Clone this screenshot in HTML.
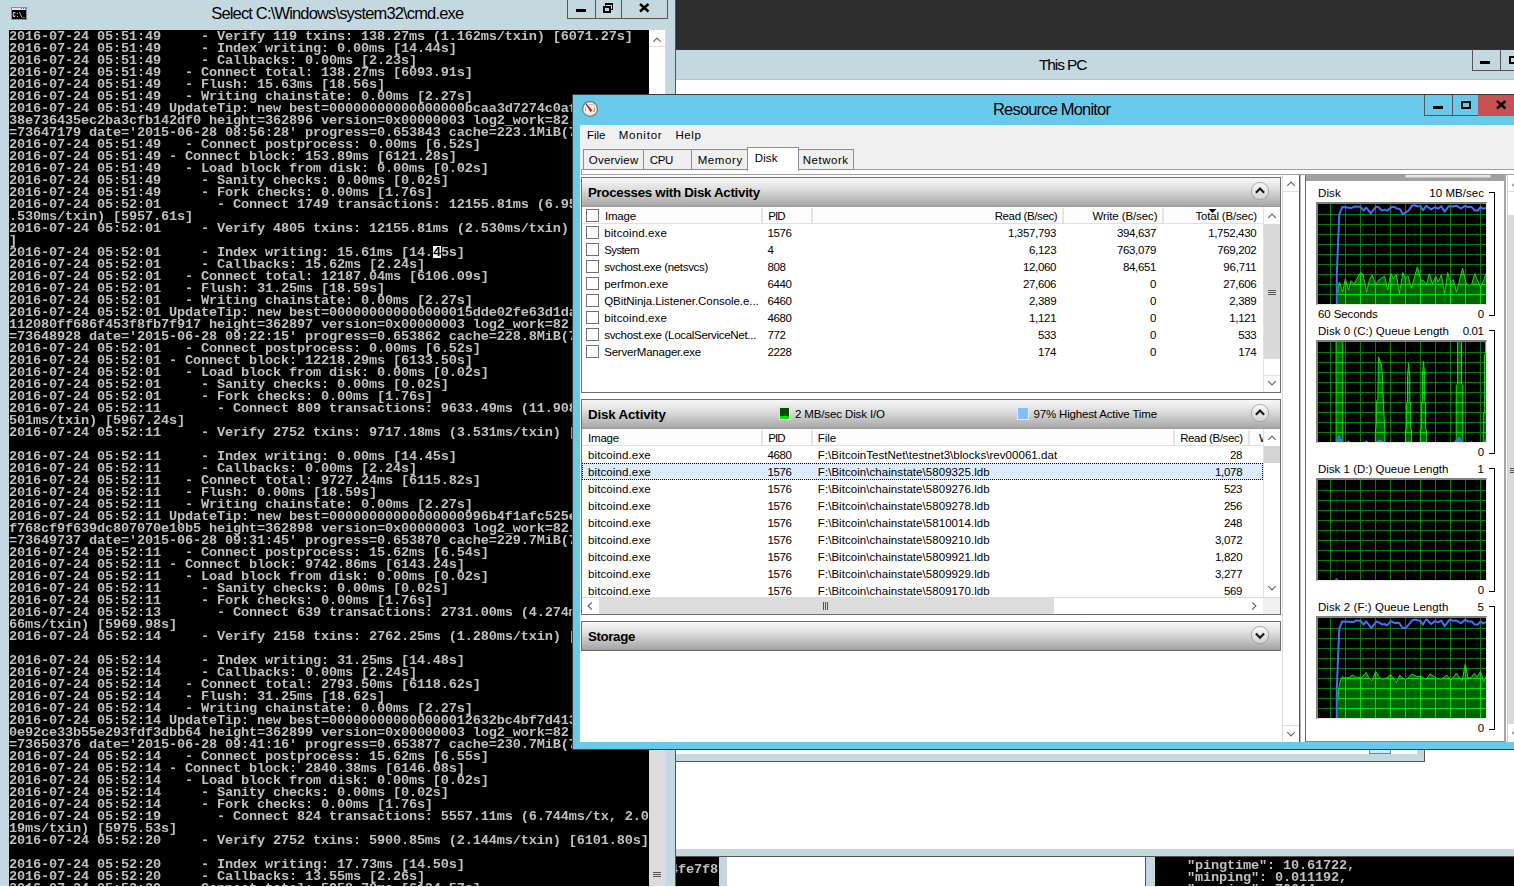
<!DOCTYPE html>
<html><head><meta charset="utf-8"><title>Resource Monitor</title>
<style>
html,body{margin:0;padding:0}
body{width:1514px;height:887px;overflow:hidden;background:#2d2d2d;position:relative;font-family:"Liberation Sans",sans-serif;font-size:12px;color:#000}
.ab{position:absolute}
div,span,i,svg{box-sizing:border-box}
.con{position:absolute;margin:0;will-change:transform;font:bold 13.6px/12px "Liberation Mono",monospace;color:#c0c0c0;white-space:pre;letter-spacing:-0.16px}
.sel{color:#000}
.t{position:absolute;white-space:nowrap;line-height:16px;font-size:11.5px}
.r{text-align:right}
.row{position:absolute;left:0;width:1514px;height:17px}
.row .t{top:0px}
.cb{position:absolute;width:13px;height:13px;border:1px solid #707070;background:#fff}
.sel2{}
.gr{position:absolute}
.gframe{position:absolute;width:171px;height:103px;border-top:2px solid #808080;border-left:2px solid #808080;border-right:1px solid #e8e8e8;border-bottom:1px solid #e8e8e8}
.hdr{position:absolute;background:linear-gradient(#f8f8f8 0%,#dedede 38%,#a6a6a6 97%,#8e8e8e 100%);}

.panel{position:absolute;border:1px solid #6e6e6e;background:#fff}
.wbtn{position:absolute;border:1px solid #555;border-top:none}
</style></head><body>

<!-- ====== background windows ====== -->
<!-- This PC -->
<div class="ab" style="left:676px;top:49px;width:838px;height:31px;background:#c4d8df;border-top:1px solid #333"></div>
<div class="ab" style="left:676px;top:79px;width:838px;height:1px;background:#b4c4ca"></div>
<span class="t" id="tpc" style="top:56px;font-size:15.5px;line-height:18px;letter-spacing:-1.090px;left:1038.9px;">This PC</span>
<div class="wbtn" style="left:1472px;top:49px;width:29px;height:22px"></div>
<div class="wbtn" style="left:1500px;top:49px;width:29px;height:22px"></div>
<div class="ab" style="left:1480px;top:61px;width:10px;height:3px;background:#000"></div>
<div class="ab" style="left:1509px;top:56px;width:10px;height:8px;border:2px solid #000"></div>
<div class="ab" style="left:676px;top:80px;width:838px;height:770px;background:#fff"></div>
<!-- bottom of This PC-like window -->
<div class="ab" style="left:676px;top:754px;width:749px;height:8px;background:#c4d8df;border-bottom:1px solid #555"></div>
<div class="ab" style="left:1417px;top:749px;width:8px;height:13px;background:#c4d8df;border-right:1px solid #555;border-bottom:1px solid #555"></div>
<div class="ab" style="left:1369px;top:748px;width:22px;height:6px;background:#cce8ff;border:1px solid #4a90c8"></div>
<!-- lower strip -->
<div class="ab" style="left:676px;top:849px;width:838px;height:8px;background:#c4d8df;border-bottom:1px solid #555"></div>
<div class="ab" style="left:676px;top:857px;width:838px;height:30px;background:#fff"></div>
<div class="ab" style="left:676px;top:857px;width:43px;height:29px;background:#000;overflow:hidden"><pre class="con" style="left:-6px;top:7px">4fe7f8</pre></div>
<div class="ab" style="left:719px;top:857px;width:8px;height:29px;background:#c4d8df"></div>
<div class="ab" style="left:1145px;top:857px;width:10px;height:29px;background:#c4d8df;border-left:1px solid #555"></div>
<div class="ab" style="left:1155px;top:857px;width:359px;height:29px;background:#000;overflow:hidden"><pre class="con" style="left:0;top:3px">    "pingtime": 10.61722,
    "minping": 0.011192,
    "version": 70014,</pre></div>

<!-- ====== cmd window ====== -->
<div class="ab" style="left:0;top:0;width:676px;height:886px;background:#c4d8df;border-right:1px solid #555"></div>
<div class="ab" style="left:9px;top:30px;width:640px;height:856px;background:#000;overflow:hidden"><div class="ab" style="left:424px;top:216px;width:8px;height:12px;background:#fff"></div><pre class="con" id="con" style="left:0;top:1px">2016-07-24 05:51:49     - Verify 119 txins: 138.27ms (1.162ms/txin) [6071.27s]
2016-07-24 05:51:49     - Index writing: 0.00ms [14.44s]
2016-07-24 05:51:49     - Callbacks: 0.00ms [2.23s]
2016-07-24 05:51:49   - Connect total: 138.27ms [6093.91s]
2016-07-24 05:51:49   - Flush: 15.63ms [18.56s]
2016-07-24 05:51:49   - Writing chainstate: 0.00ms [2.27s]
2016-07-24 05:51:49 UpdateTip: new best=00000000000000000bcaa3d7274c0af5c1b9e07d
38e736435ec2ba3cfb142df0 height=362896 version=0x00000003 log2_work=82.971514 tx
=73647179 date='2015-06-28 08:56:28' progress=0.653843 cache=223.1MiB(74812tx)
2016-07-24 05:51:49   - Connect postprocess: 0.00ms [6.52s]
2016-07-24 05:51:49 - Connect block: 153.89ms [6121.28s]
2016-07-24 05:51:49   - Load block from disk: 0.00ms [0.02s]
2016-07-24 05:51:49     - Sanity checks: 0.00ms [0.02s]
2016-07-24 05:51:49     - Fork checks: 0.00ms [1.76s]
2016-07-24 05:52:01       - Connect 1749 transactions: 12155.81ms (6.950ms/tx, 2
.530ms/txin) [5957.61s]
2016-07-24 05:52:01     - Verify 4805 txins: 12155.81ms (2.530ms/txin) [6083.43s
]
2016-07-24 05:52:01     - Index writing: 15.61ms [14.<span class="sel">4</span>5s]
2016-07-24 05:52:01     - Callbacks: 15.62ms [2.24s]
2016-07-24 05:52:01   - Connect total: 12187.04ms [6106.09s]
2016-07-24 05:52:01   - Flush: 31.25ms [18.59s]
2016-07-24 05:52:01   - Writing chainstate: 0.00ms [2.27s]
2016-07-24 05:52:01 UpdateTip: new best=000000000000000015dde02fe63d1da47c0b93e5
112080ff686f453f8fb7f917 height=362897 version=0x00000003 log2_work=82.971538 tx
=73648928 date='2015-06-28 09:22:15' progress=0.653862 cache=228.8MiB(76950tx)
2016-07-24 05:52:01   - Connect postprocess: 0.00ms [6.52s]
2016-07-24 05:52:01 - Connect block: 12218.29ms [6133.50s]
2016-07-24 05:52:01   - Load block from disk: 0.00ms [0.02s]
2016-07-24 05:52:01     - Sanity checks: 0.00ms [0.02s]
2016-07-24 05:52:01     - Fork checks: 0.00ms [1.76s]
2016-07-24 05:52:11       - Connect 809 transactions: 9633.49ms (11.908ms/tx, 3.
501ms/txin) [5967.24s]
2016-07-24 05:52:11     - Verify 2752 txins: 9717.18ms (3.531ms/txin) [6093.15s]

2016-07-24 05:52:11     - Index writing: 0.00ms [14.45s]
2016-07-24 05:52:11     - Callbacks: 0.00ms [2.24s]
2016-07-24 05:52:11   - Connect total: 9727.24ms [6115.82s]
2016-07-24 05:52:11   - Flush: 0.00ms [18.59s]
2016-07-24 05:52:11   - Writing chainstate: 0.00ms [2.27s]
2016-07-24 05:52:11 UpdateTip: new best=00000000000000000996b4f1afc525e8a31d07c4
f768cf9f639dc807070e10b5 height=362898 version=0x00000003 log2_work=82.971562 tx
=73649737 date='2015-06-28 09:31:45' progress=0.653870 cache=229.7MiB(77824tx)
2016-07-24 05:52:11   - Connect postprocess: 15.62ms [6.54s]
2016-07-24 05:52:11 - Connect block: 9742.86ms [6143.24s]
2016-07-24 05:52:11   - Load block from disk: 0.00ms [0.02s]
2016-07-24 05:52:11     - Sanity checks: 0.00ms [0.02s]
2016-07-24 05:52:11     - Fork checks: 0.00ms [1.76s]
2016-07-24 05:52:13       - Connect 639 transactions: 2731.00ms (4.274ms/tx, 1.2
66ms/txin) [5969.98s]
2016-07-24 05:52:14     - Verify 2158 txins: 2762.25ms (1.280ms/txin) [6095.91s]

2016-07-24 05:52:14     - Index writing: 31.25ms [14.48s]
2016-07-24 05:52:14     - Callbacks: 0.00ms [2.24s]
2016-07-24 05:52:14   - Connect total: 2793.50ms [6118.62s]
2016-07-24 05:52:14   - Flush: 31.25ms [18.62s]
2016-07-24 05:52:14   - Writing chainstate: 0.00ms [2.27s]
2016-07-24 05:52:14 UpdateTip: new best=000000000000000012632bc4bf7d413a95e6c208
0e92ce33b55e293fdf3dbb64 height=362899 version=0x00000003 log2_work=82.971586 tx
=73650376 date='2015-06-28 09:41:16' progress=0.653877 cache=230.7MiB(78463tx
2016-07-24 05:52:14   - Connect postprocess: 15.62ms [6.55s]
2016-07-24 05:52:14 - Connect block: 2840.38ms [6146.08s]
2016-07-24 05:52:14   - Load block from disk: 0.00ms [0.02s]
2016-07-24 05:52:14     - Sanity checks: 0.00ms [0.02s]
2016-07-24 05:52:14     - Fork checks: 0.00ms [1.76s]
2016-07-24 05:52:19       - Connect 824 transactions: 5557.11ms (6.744ms/tx, 2.0
19ms/txin) [5975.53s]
2016-07-24 05:52:20     - Verify 2752 txins: 5900.85ms (2.144ms/txin) [6101.80s]

2016-07-24 05:52:20     - Index writing: 17.73ms [14.50s]
2016-07-24 05:52:20     - Callbacks: 13.55ms [2.26s]
2016-07-24 05:52:20   - Connect total: 5958.78ms [6124.57s]</pre></div>
<!-- cmd scrollbar -->
<div class="ab" style="left:649px;top:30px;width:17px;height:856px;background:#fff;border-right:1px solid #dadada"></div>
<div class="ab" style="left:649px;top:749px;width:16px;height:137px;background:#dcdcdc"></div>
<svg class="ab" style="left:649px;top:32px" width="16" height="16"><polyline points="4.3,9.85 8,6.15 11.7,9.85" fill="none" stroke="#606060" stroke-width="1.1"/></svg>
<div class="ab" style="left:649px;top:46px;width:16px;height:1px;background:#dcdcdc"></div>
<div class="ab" style="left:653px;top:872px;width:8px;height:1px;background:#555;box-shadow:0 2px 0 #555,0 4px 0 #555"></div>
<!-- cmd icon -->
<svg class="ab" style="left:11px;top:7px;will-change:transform" width="16" height="13" viewBox="0 0 16 13"><rect x="0.5" y="0.5" width="15" height="12" fill="#000" stroke="#8e8e98"/><rect x="1" y="1" width="14" height="2" fill="#e2e6ee"/><rect x="10" y="1" width="1" height="1" fill="#5878b0"/><rect x="12" y="1" width="1" height="1" fill="#5878b0"/><rect x="14" y="1" width="1" height="1" fill="#5878b0"/><text x="1.6" y="10" font-family="Liberation Mono, monospace" font-weight="bold" font-size="7.5" fill="#fff" textLength="12.6" lengthAdjust="spacingAndGlyphs">C:\_</text></svg>
<span class="t" id="cmdtitle" style="top:4px;font-size:16.5px;line-height:18px;letter-spacing:-0.842px;left:211.3px;">Select C:\Windows\system32\cmd.exe</span>
<div class="wbtn" style="left:567px;top:0;width:29px;height:19px"></div>
<div class="wbtn" style="left:595px;top:0;width:27px;height:19px"></div>
<div class="wbtn" style="left:621px;top:0;width:47px;height:19px"></div>
<div class="ab" style="left:576px;top:9px;width:10px;height:3px;background:#000"></div>
<div class="ab" style="left:605px;top:3px;width:8px;height:7px;border:1px solid #000;border-top-width:2px"></div>
<div class="ab" style="left:603px;top:6px;width:8px;height:7px;border:2px solid #000;background:#c4d8df"></div>
<svg class="ab" style="left:639px;top:3px" width="11" height="10"><path d="M1 1 L9.5 8.5 M9.5 1 L1 8.5" stroke="#000" stroke-width="2.4" fill="none"/></svg>

<!-- ====== Resource Monitor ====== -->
<div class="ab" style="left:572px;top:94px;width:950px;height:656px;background:#69c9ea;border:1px solid #3c3c3c"></div>
<div class="ab" style="left:580px;top:125px;width:934px;height:617px;background:#f0f0f0"></div>
<span class="t" id="rmtitle" style="top:100px;font-size:16.5px;line-height:18px;letter-spacing:-0.822px;left:993.0px;">Resource Monitor</span>
<!-- icon -->
<svg class="ab" style="left:582px;top:101px" width="16" height="16"><defs><linearGradient id="icg" x1="0" y1="0" x2="0" y2="1"><stop offset="0" stop-color="#ffffff"/><stop offset="0.6" stop-color="#fbfbfb"/><stop offset="1" stop-color="#dedede"/></linearGradient></defs><circle cx="8" cy="7.9" r="7.4" fill="url(#icg)" stroke="#807878" stroke-width="1.3"/><path d="M3.5 10.4 L3.5 6.4" fill="none" stroke="#9aa8a0" stroke-width="1"/><path d="M6.8 3.4 L10.6 3.4 Q12 3.6 12.1 5.6" fill="none" stroke="#9aa8a0" stroke-width="0.9"/><path d="M12.6 6.2 L12.6 9.4 Q12.5 10.5 11.2 10.6" fill="none" stroke="#f08424" stroke-width="1.1"/><polygon points="3.6,3.2 4.5,2.6 10.3,9.5 8.5,11" fill="#d40f14"/></svg>
<!-- RM buttons -->
<div class="wbtn" style="left:1424px;top:95px;width:29px;height:21px"></div>
<div class="wbtn" style="left:1452px;top:95px;width:27px;height:21px"></div>
<div class="ab" style="left:1478px;top:95px;width:44px;height:21px;background:#c75050"></div>
<div class="ab" style="left:1433px;top:106px;width:10px;height:3px;background:#000"></div>
<div class="ab" style="left:1461px;top:101px;width:10px;height:8px;border:2px solid #000"></div>
<svg class="ab" style="left:1496px;top:100px" width="11" height="10"><path d="M1 1 L9.5 8.5 M9.5 1 L1 8.5" stroke="#000" stroke-width="2.4" fill="none"/></svg>
<!-- menu -->
<span class="t" style="top:127px;letter-spacing:0.032px;left:586.9px;">File</span>
<span class="t" style="top:127px;letter-spacing:0.771px;left:618.7px;">Monitor</span>
<span class="t" style="top:127px;letter-spacing:0.626px;left:675.4px;">Help</span>
<!-- tabs -->
<div class="ab" style="left:581px;top:169px;width:940px;height:6px;background:#fdfdfd;border:1px solid #a0a0a0"></div>
<div class="ab" style="left:583px;top:149px;width:61px;height:21px;border:1px solid #8e8e8e;background:#efefef"></div>
<div class="ab" style="left:643px;top:149px;width:49px;height:21px;border:1px solid #8e8e8e;background:#efefef"></div>
<div class="ab" style="left:691px;top:149px;width:57px;height:21px;border:1px solid #8e8e8e;background:#efefef"></div>
<div class="ab" style="left:798px;top:149px;width:56px;height:21px;border:1px solid #8e8e8e;background:#efefef"></div>
<div class="ab" style="left:747px;top:147px;width:52px;height:24px;border:1px solid #8e8e8e;border-bottom:none;background:#fff"></div>
<span class="t" style="top:152px;letter-spacing:0.215px;left:588.8px;">Overview</span>
<span class="t" style="top:152px;letter-spacing:-0.374px;left:649.8px;">CPU</span>
<span class="t" style="top:152px;letter-spacing:0.605px;left:697.7px;">Memory</span>
<span class="t" style="top:150px;letter-spacing:0.096px;left:754.8px;">Disk</span>
<span class="t" style="top:152px;letter-spacing:0.510px;left:802.8px;">Network</span>
<!-- main white area -->
<div class="ab" style="left:580px;top:175px;width:703px;height:567px;background:#fff"></div>
<!-- left pane scrollbar -->
<div class="ab" style="left:1282px;top:175px;width:17px;height:567px;background:#fff;border-left:1px solid #dcdcdc"></div>
<div class="ab" style="left:1283px;top:191px;width:16px;height:1px;background:#dcdcdc"></div>
<div class="ab" style="left:1283px;top:725px;width:16px;height:1px;background:#dcdcdc"></div>
<svg class="ab" style="left:1283px;top:176px" width="16" height="16"><polyline points="4.3,9.85 8,6.15 11.7,9.85" fill="none" stroke="#606060" stroke-width="1.1"/></svg>
<svg class="ab" style="left:1283px;top:726px" width="16" height="16"><polyline points="4.3,6.15 8,9.85 11.7,6.15" fill="none" stroke="#606060" stroke-width="1.1"/></svg>
<!-- splitter -->
<div class="ab" style="left:1299px;top:175px;width:7px;height:567px;background:#fff;border-left:1px solid #5a5a5a;border-right:1px solid #696969"></div>
<div class="ab" style="left:1300px;top:175px;width:1px;height:567px;background:#b8b8b8"></div>

<!-- Processes panel -->
<div class="panel" style="left:581px;top:177px;width:700px;height:216px"></div>
<div class="hdr" style="left:582px;top:178px;width:698px;height:29px"></div>
<span class="t" style="top:183px;font-size:13.333px;font-weight:700;line-height:20px;letter-spacing:-0.298px;left:587.9px;">Processes with Disk Activity</span>
<svg class="ab" style="left:1250px;top:181px" width="20" height="20"><defs><linearGradient id="cg1260191" x1="0" y1="0" x2="0" y2="1"><stop offset="0" stop-color="#fafafa"/><stop offset="1" stop-color="#d2d2d2"/></linearGradient></defs><circle cx="10" cy="10" r="8.6" fill="url(#cg1260191)" stroke="#9a9a9a" stroke-width="0.8"/><polyline points="5.9,11.8 10,7.6 14.1,11.8" fill="none" stroke="#1a1a1a" stroke-width="2.2"/></svg>
<div class="ab" style="left:582px;top:207px;width:681px;height:17px;background:#fdfdfd;border-bottom:1px solid #e0e0e0"></div>
<i class="cb" style="left:586px;top:209px"></i>
<span class="t" style="top:208px;letter-spacing:-0.182px;left:604.9px;">Image</span>
<span class="t" style="top:208px;letter-spacing:-0.971px;left:768.3px;">PID</span>
<span class="t" style="top:208px;letter-spacing:-0.371px;right:456.7px;text-align:right;">Read (B/sec)</span>
<span class="t" style="top:208px;letter-spacing:-0.099px;right:356.6px;text-align:right;">Write (B/sec)</span>
<span class="t" style="top:208px;letter-spacing:-0.182px;right:257.0px;text-align:right;">Total (B/sec)</span>
<div class="ab" style="left:761px;top:208px;width:2px;height:15px;background:#e4e4e4"></div>
<div class="ab" style="left:811px;top:208px;width:2px;height:15px;background:#e4e4e4"></div>
<div class="ab" style="left:1062px;top:208px;width:2px;height:15px;background:#e4e4e4"></div>
<div class="ab" style="left:1162px;top:208px;width:2px;height:15px;background:#e4e4e4"></div>
<svg class="ab" style="left:1208px;top:209px" width="9" height="5"><polygon points="0.5,0 8.5,0 4.5,4" fill="#000"/></svg>
<i class="cb" style="left:586px;top:226px"></i><span class="t" style="top:225px;letter-spacing:0.115px;left:604.2px;">bitcoind.exe</span><span class="t" style="top:225px;letter-spacing:-0.359px;left:767.5px;">1576</span><span class="t" style="top:225px;letter-spacing:-0.335px;right:457.9px;text-align:right;">1,357,793</span><span class="t" style="top:225px;letter-spacing:-0.346px;right:357.9px;text-align:right;">394,637</span><span class="t" style="top:225px;letter-spacing:-0.335px;right:257.7px;text-align:right;">1,752,430</span>
<i class="cb" style="left:586px;top:243px"></i><span class="t" style="top:242px;letter-spacing:-0.614px;left:604.2px;">System</span><span class="t" style="top:242px;letter-spacing:-0.248px;left:767.5px;">4</span><span class="t" style="top:242px;letter-spacing:-0.325px;right:457.8px;text-align:right;">6,123</span><span class="t" style="top:242px;letter-spacing:-0.346px;right:357.9px;text-align:right;">763,079</span><span class="t" style="top:242px;letter-spacing:-0.346px;right:257.7px;text-align:right;">769,202</span>
<i class="cb" style="left:586px;top:260px"></i><span class="t" style="top:259px;letter-spacing:-0.325px;left:604.2px;">svchost.exe (netsvcs)</span><span class="t" style="top:259px;letter-spacing:-0.343px;left:767.5px;">808</span><span class="t" style="top:259px;letter-spacing:-0.338px;right:457.9px;text-align:right;">12,060</span><span class="t" style="top:259px;letter-spacing:-0.338px;right:357.9px;text-align:right;">84,651</span><span class="t" style="top:259px;letter-spacing:-0.195px;right:257.5px;text-align:right;">96,711</span>
<i class="cb" style="left:586px;top:277px"></i><span class="t" style="top:276px;letter-spacing:0.002px;left:604.2px;">perfmon.exe</span><span class="t" style="top:276px;letter-spacing:-0.359px;left:767.5px;">6440</span><span class="t" style="top:276px;letter-spacing:-0.338px;right:457.9px;text-align:right;">27,606</span><span class="t" style="top:276px;letter-spacing:-0.248px;right:357.8px;text-align:right;">0</span><span class="t" style="top:276px;letter-spacing:-0.338px;right:257.7px;text-align:right;">27,606</span>
<i class="cb" style="left:586px;top:294px"></i><span class="t" style="top:293px;letter-spacing:-0.069px;left:604.2px;">QBitNinja.Listener.Console.e...</span><span class="t" style="top:293px;letter-spacing:-0.359px;left:767.5px;">6460</span><span class="t" style="top:293px;letter-spacing:-0.325px;right:457.8px;text-align:right;">2,389</span><span class="t" style="top:293px;letter-spacing:-0.248px;right:357.8px;text-align:right;">0</span><span class="t" style="top:293px;letter-spacing:-0.325px;right:257.6px;text-align:right;">2,389</span>
<i class="cb" style="left:586px;top:311px"></i><span class="t" style="top:310px;letter-spacing:0.115px;left:604.2px;">bitcoind.exe</span><span class="t" style="top:310px;letter-spacing:-0.359px;left:767.5px;">4680</span><span class="t" style="top:310px;letter-spacing:-0.325px;right:457.8px;text-align:right;">1,121</span><span class="t" style="top:310px;letter-spacing:-0.248px;right:357.8px;text-align:right;">0</span><span class="t" style="top:310px;letter-spacing:-0.325px;right:257.6px;text-align:right;">1,121</span>
<i class="cb" style="left:586px;top:328px"></i><span class="t" style="top:327px;letter-spacing:-0.297px;left:604.2px;">svchost.exe (LocalServiceNet...</span><span class="t" style="top:327px;letter-spacing:-0.343px;left:767.5px;">772</span><span class="t" style="top:327px;letter-spacing:-0.343px;right:457.9px;text-align:right;">533</span><span class="t" style="top:327px;letter-spacing:-0.248px;right:357.8px;text-align:right;">0</span><span class="t" style="top:327px;letter-spacing:-0.343px;right:257.7px;text-align:right;">533</span>
<i class="cb" style="left:586px;top:345px"></i><span class="t" style="top:344px;letter-spacing:-0.213px;left:604.2px;">ServerManager.exe</span><span class="t" style="top:344px;letter-spacing:-0.359px;left:767.5px;">2228</span><span class="t" style="top:344px;letter-spacing:-0.343px;right:457.9px;text-align:right;">174</span><span class="t" style="top:344px;letter-spacing:-0.248px;right:357.8px;text-align:right;">0</span><span class="t" style="top:344px;letter-spacing:-0.343px;right:257.7px;text-align:right;">174</span>
<!-- processes vscroll -->
<div class="ab" style="left:1263px;top:207px;width:17px;height:185px;background:#fff;border-left:1px solid #e0e0e0"></div>
<div class="ab" style="left:1264px;top:224px;width:16px;height:135px;background:#dadada"></div>
<div class="ab" style="left:1264px;top:375px;width:16px;height:1px;background:#e4e4e4"></div>
<div class="ab" style="left:1268px;top:290px;width:8px;height:1px;background:#555;box-shadow:0 2px 0 #555,0 4px 0 #555"></div>
<svg class="ab" style="left:1264px;top:208px" width="16" height="16"><polyline points="4.3,9.85 8,6.15 11.7,9.85" fill="none" stroke="#606060" stroke-width="1.1"/></svg>
<svg class="ab" style="left:1264px;top:375px" width="16" height="16"><polyline points="4.3,6.15 8,9.85 11.7,6.15" fill="none" stroke="#606060" stroke-width="1.1"/></svg>

<!-- Disk activity panel -->
<div class="panel" style="left:581px;top:399px;width:700px;height:216px"></div>
<div class="hdr" style="left:582px;top:400px;width:698px;height:29px"></div>
<span class="t" style="top:405px;font-size:13.333px;font-weight:700;line-height:20px;letter-spacing:-0.131px;left:587.9px;">Disk Activity</span>
<svg class="ab" style="left:1250px;top:403px" width="20" height="20"><defs><linearGradient id="cg1260413" x1="0" y1="0" x2="0" y2="1"><stop offset="0" stop-color="#fafafa"/><stop offset="1" stop-color="#d2d2d2"/></linearGradient></defs><circle cx="10" cy="10" r="8.6" fill="url(#cg1260413)" stroke="#9a9a9a" stroke-width="0.8"/><polyline points="5.9,11.8 10,7.6 14.1,11.8" fill="none" stroke="#1a1a1a" stroke-width="2.2"/></svg>
<div class="ab" style="left:779px;top:407px;width:11px;height:13px;background:#005000;border:1px solid #e0e0e0;border-right-color:#fff"></div>
<div class="ab" style="left:780px;top:416px;width:9px;height:3px;background:#00e000"></div>
<span class="t" style="top:406px;letter-spacing:-0.116px;left:794.9px;">2 MB/sec Disk I/O</span>
<div class="ab" style="left:1017px;top:407px;width:12px;height:13px;background:#80c0ff;border:1px solid #e8e8e8"></div>
<span class="t" style="top:406px;letter-spacing:-0.167px;left:1033.5px;">97% Highest Active Time</span>
<div class="ab" style="left:582px;top:429px;width:681px;height:17px;background:#fdfdfd;border-bottom:1px solid #e0e0e0"></div>
<span class="t" style="top:430px;letter-spacing:-0.182px;left:588.0px;">Image</span>
<span class="t" style="top:430px;letter-spacing:-0.971px;left:768.3px;">PID</span>
<span class="t" style="top:430px;letter-spacing:-0.043px;left:817.8px;">File</span>
<span class="t" style="top:430px;letter-spacing:-0.371px;right:271.2px;text-align:right;">Read (B/sec)</span>
<div class="ab" style="left:1259px;top:430px;width:4px;height:15px;overflow:hidden"><span class="t" style="left:0;top:0">W</span></div>
<div class="ab" style="left:761px;top:430px;width:2px;height:15px;background:#e4e4e4"></div>
<div class="ab" style="left:811px;top:430px;width:2px;height:15px;background:#e4e4e4"></div>
<div class="ab" style="left:1173px;top:430px;width:2px;height:15px;background:#e4e4e4"></div>
<div class="ab" style="left:1248px;top:430px;width:2px;height:15px;background:#e4e4e4"></div>
<div class="ab" style="left:582px;top:463px;width:681px;height:17px;background:#ddebff;border:1px dotted #000"></div>
<span class="t" style="top:447px;letter-spacing:0.115px;left:588.0px;">bitcoind.exe</span><span class="t" style="top:447px;letter-spacing:-0.359px;left:767.5px;">4680</span><span class="t" style="top:447px;letter-spacing:0.048px;left:817.8px;">F:\BitcoinTestNet\testnet3\blocks\rev00061.dat</span><span class="t" style="top:447px;letter-spacing:-0.319px;right:271.8px;text-align:right;">28</span>
<span class="t" style="top:464px;letter-spacing:0.115px;left:588.0px;">bitcoind.exe</span><span class="t" style="top:464px;letter-spacing:-0.359px;left:767.5px;">1576</span><span class="t" style="top:464px;letter-spacing:0.057px;left:817.8px;">F:\Bitcoin\chainstate\5809325.ldb</span><span class="t" style="top:464px;letter-spacing:-0.325px;right:271.8px;text-align:right;">1,078</span>
<span class="t" style="top:481px;letter-spacing:0.115px;left:588.0px;">bitcoind.exe</span><span class="t" style="top:481px;letter-spacing:-0.359px;left:767.5px;">1576</span><span class="t" style="top:481px;letter-spacing:0.057px;left:817.8px;">F:\Bitcoin\chainstate\5809276.ldb</span><span class="t" style="top:481px;letter-spacing:-0.343px;right:271.9px;text-align:right;">523</span>
<span class="t" style="top:498px;letter-spacing:0.115px;left:588.0px;">bitcoind.exe</span><span class="t" style="top:498px;letter-spacing:-0.359px;left:767.5px;">1576</span><span class="t" style="top:498px;letter-spacing:0.057px;left:817.8px;">F:\Bitcoin\chainstate\5809278.ldb</span><span class="t" style="top:498px;letter-spacing:-0.343px;right:271.9px;text-align:right;">256</span>
<span class="t" style="top:515px;letter-spacing:0.115px;left:588.0px;">bitcoind.exe</span><span class="t" style="top:515px;letter-spacing:-0.359px;left:767.5px;">1576</span><span class="t" style="top:515px;letter-spacing:0.057px;left:817.8px;">F:\Bitcoin\chainstate\5810014.ldb</span><span class="t" style="top:515px;letter-spacing:-0.343px;right:271.9px;text-align:right;">248</span>
<span class="t" style="top:532px;letter-spacing:0.115px;left:588.0px;">bitcoind.exe</span><span class="t" style="top:532px;letter-spacing:-0.359px;left:767.5px;">1576</span><span class="t" style="top:532px;letter-spacing:0.057px;left:817.8px;">F:\Bitcoin\chainstate\5809210.ldb</span><span class="t" style="top:532px;letter-spacing:-0.325px;right:271.8px;text-align:right;">3,072</span>
<span class="t" style="top:549px;letter-spacing:0.115px;left:588.0px;">bitcoind.exe</span><span class="t" style="top:549px;letter-spacing:-0.359px;left:767.5px;">1576</span><span class="t" style="top:549px;letter-spacing:0.057px;left:817.8px;">F:\Bitcoin\chainstate\5809921.ldb</span><span class="t" style="top:549px;letter-spacing:-0.325px;right:271.8px;text-align:right;">1,820</span>
<span class="t" style="top:566px;letter-spacing:0.115px;left:588.0px;">bitcoind.exe</span><span class="t" style="top:566px;letter-spacing:-0.359px;left:767.5px;">1576</span><span class="t" style="top:566px;letter-spacing:0.057px;left:817.8px;">F:\Bitcoin\chainstate\5809929.ldb</span><span class="t" style="top:566px;letter-spacing:-0.325px;right:271.8px;text-align:right;">3,277</span>
<span class="t" style="top:583px;letter-spacing:0.115px;left:588.0px;">bitcoind.exe</span><span class="t" style="top:583px;letter-spacing:-0.359px;left:767.5px;">1576</span><span class="t" style="top:583px;letter-spacing:0.057px;left:817.8px;">F:\Bitcoin\chainstate\5809170.ldb</span><span class="t" style="top:583px;letter-spacing:-0.343px;right:271.9px;text-align:right;">569</span>
<!-- disk activity vscroll -->
<div class="ab" style="left:1263px;top:429px;width:17px;height:169px;background:#fff;border-left:1px solid #e0e0e0"></div>
<div class="ab" style="left:1264px;top:446px;width:16px;height:17px;background:#d4d4d4"></div>
<svg class="ab" style="left:1264px;top:430px" width="16" height="16"><polyline points="4.3,9.85 8,6.15 11.7,9.85" fill="none" stroke="#606060" stroke-width="1.1"/></svg>
<svg class="ab" style="left:1264px;top:580px" width="16" height="16"><polyline points="4.3,6.15 8,9.85 11.7,6.15" fill="none" stroke="#606060" stroke-width="1.1"/></svg>
<!-- hscroll -->
<div class="ab" style="left:582px;top:597px;width:698px;height:17px;background:#fff;border-top:1px solid #dcdcdc"></div>
<div class="ab" style="left:599px;top:598px;width:455px;height:16px;background:#dcdcdc"></div>
<div class="ab" style="left:1263px;top:598px;width:17px;height:16px;background:#f0f0f0"></div>
<div class="ab" style="left:823px;top:602px;width:1px;height:8px;background:#555;box-shadow:2px 0 0 #555,4px 0 0 #555"></div>
<svg class="ab" style="left:582px;top:598px" width="16" height="16"><polyline points="9.85,4.3 6.15,8 9.85,11.7" fill="none" stroke="#606060" stroke-width="1.1"/></svg>
<svg class="ab" style="left:1246px;top:598px" width="16" height="16"><polyline points="6.15,4.3 9.85,8 6.15,11.7" fill="none" stroke="#606060" stroke-width="1.1"/></svg>

<!-- Storage panel -->
<div class="panel" style="left:581px;top:621px;width:700px;height:30px"></div>
<div class="hdr" style="left:582px;top:622px;width:698px;height:28px"></div>
<span class="t" style="top:627px;font-size:13.333px;font-weight:700;line-height:20px;letter-spacing:-0.359px;left:587.9px;">Storage</span>
<svg class="ab" style="left:1250px;top:625px" width="20" height="20"><defs><linearGradient id="cg1260635" x1="0" y1="0" x2="0" y2="1"><stop offset="0" stop-color="#fafafa"/><stop offset="1" stop-color="#d2d2d2"/></linearGradient></defs><circle cx="10" cy="10" r="8.6" fill="url(#cg1260635)" stroke="#9a9a9a" stroke-width="0.8"/><polyline points="5.9,8.6 10,12.8 14.1,8.6" fill="none" stroke="#1a1a1a" stroke-width="2.2"/></svg>

<!-- graph pane -->
<div class="ab" style="left:1306px;top:175px;width:200px;height:567px;background:#fff;border-bottom:1px solid #8a8a8a;border-right:2px solid #a6a6a6"></div>
<div class="ab" style="left:1306px;top:175px;width:198px;height:6px;background:#a0a0a0"></div>
<div class="ab" style="left:1405px;top:175px;width:86px;height:3px;background:#e6e6e6;border:1px solid #c0c0c0;border-top:none"></div>
<span class="t" style="top:185px;letter-spacing:0.121px;left:1318.0px;">Disk</span>
<span class="t" style="top:185px;letter-spacing:0.037px;right:30.0px;text-align:right;">10 MB/sec</span>
<span class="t" style="top:306px;letter-spacing:-0.048px;right:29.9px;text-align:right;">0</span>
<div class="ab" style="left:1489px;top:192px;width:6px;height:1px;background:#000"></div><div class="ab" style="left:1494px;top:192px;width:1px;height:124px;background:#000"></div><div class="ab" style="left:1489px;top:315px;width:6px;height:1px;background:#000"></div>
<div class="gframe" style="left:1316px;top:202px"></div>
<span class="t" style="top:323px;letter-spacing:0.023px;left:1318.0px;">Disk 0 (C:) Queue Length</span>
<span class="t" style="top:323px;letter-spacing:-0.408px;right:30.4px;text-align:right;">0.01</span>
<span class="t" style="top:444px;letter-spacing:-0.048px;right:29.9px;text-align:right;">0</span>
<div class="ab" style="left:1489px;top:330px;width:6px;height:1px;background:#000"></div><div class="ab" style="left:1494px;top:330px;width:1px;height:124px;background:#000"></div><div class="ab" style="left:1489px;top:453px;width:6px;height:1px;background:#000"></div>
<div class="gframe" style="left:1316px;top:340px"></div>
<span class="t" style="top:461px;letter-spacing:0.002px;left:1318.0px;">Disk 1 (D:) Queue Length</span>
<span class="t" style="top:461px;letter-spacing:-1.448px;right:31.5px;text-align:right;">1</span>
<span class="t" style="top:582px;letter-spacing:-0.048px;right:29.9px;text-align:right;">0</span>
<div class="ab" style="left:1489px;top:468px;width:6px;height:1px;background:#000"></div><div class="ab" style="left:1494px;top:468px;width:1px;height:124px;background:#000"></div><div class="ab" style="left:1489px;top:591px;width:6px;height:1px;background:#000"></div>
<div class="gframe" style="left:1316px;top:478px"></div>
<span class="t" style="top:599px;letter-spacing:0.056px;left:1318.0px;">Disk 2 (F:) Queue Length</span>
<span class="t" style="top:599px;letter-spacing:-0.148px;right:30.2px;text-align:right;">5</span>
<span class="t" style="top:720px;letter-spacing:-0.048px;right:29.9px;text-align:right;">0</span>
<div class="ab" style="left:1489px;top:606px;width:6px;height:1px;background:#000"></div><div class="ab" style="left:1494px;top:606px;width:1px;height:124px;background:#000"></div><div class="ab" style="left:1489px;top:729px;width:6px;height:1px;background:#000"></div>
<div class="gframe" style="left:1316px;top:616px"></div>
<span class="t" style="top:306px;letter-spacing:-0.109px;left:1318.0px;">60 Seconds</span>
<svg class="gr" style="left:1318px;top:204px" width="168" height="100" viewBox="0 0 168 100"><rect width="168" height="100" fill="#000"/><g fill="#008000"><rect x="12" y="0" width="1" height="100"/><rect x="27" y="0" width="1" height="100"/><rect x="42" y="0" width="1" height="100"/><rect x="57" y="0" width="1" height="100"/><rect x="72" y="0" width="1" height="100"/><rect x="87" y="0" width="1" height="100"/><rect x="102" y="0" width="1" height="100"/><rect x="117" y="0" width="1" height="100"/><rect x="132" y="0" width="1" height="100"/><rect x="147" y="0" width="1" height="100"/><rect x="162" y="0" width="1" height="100"/><rect x="0" y="10" width="168" height="1"/><rect x="0" y="20" width="168" height="1"/><rect x="0" y="30" width="168" height="1"/><rect x="0" y="40" width="168" height="1"/><rect x="0" y="50" width="168" height="1"/><rect x="0" y="60" width="168" height="1"/><rect x="0" y="70" width="168" height="1"/><rect x="0" y="80" width="168" height="1"/><rect x="0" y="90" width="168" height="1"/></g><clipPath id="c1"><polygon points="19.8,88.7 21.3,78.0 24.6,88.1 27.4,74.8 30.5,86.2 33.0,76.7 36.2,79.9 42.5,68.5 45.0,70.4 48.5,88.1 51.4,76.1 54.1,71.0 57.7,80.5 60.8,76.1 66.5,72.3 69.7,85.6 72.8,69.2 75.4,74.8 78.3,70.4 81.4,89.4 84.8,68.5 87.4,74.8 89.9,71.7 93.4,84.3 99.4,62.8 103.1,76.7 105.7,76.7 108.2,81.1 111.3,69.8 114.5,79.9 117.7,72.3 120.2,78.0 123.3,71.0 126.5,89.4 129.7,68.5 132.8,78.0 135.3,75.5 138.5,88.1 144.6,64.1 148.0,78.6 151.1,82.4 153.7,80.5 156.6,69.8 162.5,83.0 165.7,76.1 168.2,69.2 168.2,100.0 19.8,100.0"/></clipPath><polygon points="19.8,88.7 21.3,78.0 24.6,88.1 27.4,74.8 30.5,86.2 33.0,76.7 36.2,79.9 42.5,68.5 45.0,70.4 48.5,88.1 51.4,76.1 54.1,71.0 57.7,80.5 60.8,76.1 66.5,72.3 69.7,85.6 72.8,69.2 75.4,74.8 78.3,70.4 81.4,89.4 84.8,68.5 87.4,74.8 89.9,71.7 93.4,84.3 99.4,62.8 103.1,76.7 105.7,76.7 108.2,81.1 111.3,69.8 114.5,79.9 117.7,72.3 120.2,78.0 123.3,71.0 126.5,89.4 129.7,68.5 132.8,78.0 135.3,75.5 138.5,88.1 144.6,64.1 148.0,78.6 151.1,82.4 153.7,80.5 156.6,69.8 162.5,83.0 165.7,76.1 168.2,69.2 168.2,100.0 19.8,100.0" fill="#006400"/><g fill="#00e000" clip-path="url(#c1)"><rect x="12" y="0" width="1" height="100"/><rect x="27" y="0" width="1" height="100"/><rect x="42" y="0" width="1" height="100"/><rect x="57" y="0" width="1" height="100"/><rect x="72" y="0" width="1" height="100"/><rect x="87" y="0" width="1" height="100"/><rect x="102" y="0" width="1" height="100"/><rect x="117" y="0" width="1" height="100"/><rect x="132" y="0" width="1" height="100"/><rect x="147" y="0" width="1" height="100"/><rect x="162" y="0" width="1" height="100"/><rect x="0" y="10" width="168" height="1"/><rect x="0" y="20" width="168" height="1"/><rect x="0" y="30" width="168" height="1"/><rect x="0" y="40" width="168" height="1"/><rect x="0" y="50" width="168" height="1"/><rect x="0" y="60" width="168" height="1"/><rect x="0" y="70" width="168" height="1"/><rect x="0" y="80" width="168" height="1"/><rect x="0" y="90" width="168" height="1"/></g><polyline points="19.8,88.7 21.3,78.0 24.6,88.1 27.4,74.8 30.5,86.2 33.0,76.7 36.2,79.9 42.5,68.5 45.0,70.4 48.5,88.1 51.4,76.1 54.1,71.0 57.7,80.5 60.8,76.1 66.5,72.3 69.7,85.6 72.8,69.2 75.4,74.8 78.3,70.4 81.4,89.4 84.8,68.5 87.4,74.8 89.9,71.7 93.4,84.3 99.4,62.8 103.1,76.7 105.7,76.7 108.2,81.1 111.3,69.8 114.5,79.9 117.7,72.3 120.2,78.0 123.3,71.0 126.5,89.4 129.7,68.5 132.8,78.0 135.3,75.5 138.5,88.1 144.6,64.1 148.0,78.6 151.1,82.4 153.7,80.5 156.6,69.8 162.5,83.0 165.7,76.1 168.2,69.2" fill="none" stroke="#00ee00" stroke-width="1"/><polyline points="18.8,100.0 18.8,71.0 20.0,40.7 21.3,10.4 24.2,3.1 33.7,3.9 36.2,2.6 42.5,2.8 45.7,6.6 48.2,3.5 52.6,9.4 57.7,3.1 60.2,3.1 64.0,6.6 66.5,5.6 69.0,6.6 73.5,3.1 76.6,3.1 79.1,4.7 81.7,4.7 84.8,10.2 90.5,6.6 94.3,1.4 96.8,1.2 99.4,2.2 102.5,2.2 105.0,6.3 108.2,1.8 113.2,5.4 117.0,3.1 120.2,4.7 123.3,2.2 126.5,7.6 130.9,2.2 134.7,2.6 138.5,1.8 142.9,4.4 147.3,1.8 149.9,3.1 153.7,3.1 156.8,6.6 160.0,6.6 162.5,3.1 165.0,4.7 168.2,3.9" fill="none" stroke="#4070ff" stroke-width="2" stroke-linejoin="round"/></svg>
<svg class="gr" style="left:1318px;top:342px" width="168" height="100" viewBox="0 0 168 100"><rect width="168" height="100" fill="#000"/><g fill="#008000"><rect x="12" y="0" width="1" height="100"/><rect x="27" y="0" width="1" height="100"/><rect x="42" y="0" width="1" height="100"/><rect x="57" y="0" width="1" height="100"/><rect x="72" y="0" width="1" height="100"/><rect x="87" y="0" width="1" height="100"/><rect x="102" y="0" width="1" height="100"/><rect x="117" y="0" width="1" height="100"/><rect x="132" y="0" width="1" height="100"/><rect x="147" y="0" width="1" height="100"/><rect x="162" y="0" width="1" height="100"/><rect x="0" y="10" width="168" height="1"/><rect x="0" y="20" width="168" height="1"/><rect x="0" y="30" width="168" height="1"/><rect x="0" y="40" width="168" height="1"/><rect x="0" y="50" width="168" height="1"/><rect x="0" y="60" width="168" height="1"/><rect x="0" y="70" width="168" height="1"/><rect x="0" y="80" width="168" height="1"/><rect x="0" y="90" width="168" height="1"/></g><clipPath id="c2"><polygon points="18.1,-0.9 24.8,-0.9 24.8,100.1 18.1,100.1"/><polygon points="57.4,100.1 57.4,88.1 58.3,82.4 58.3,59.7 59.9,57.1 60.2,30.6 60.5,14.8 63.4,23.0 64.6,36.9 65.5,62.8 66.8,88.1 66.8,100.1"/><polygon points="87.4,100.1 87.4,87.5 88.6,86.8 88.6,60.9 89.5,60.3 89.5,35.0 90.5,21.2 91.8,35.0 91.8,60.3 92.7,60.9 92.7,86.8 93.7,87.5 93.7,100.1"/><polygon points="102.3,100.1 102.3,87.5 103.4,86.8 103.4,60.3 104.4,59.7 104.4,33.2 105.5,19.3 106.7,33.2 106.7,59.7 107.6,60.3 107.6,86.8 108.6,87.5 108.6,100.1"/><polygon points="138.2,100.1 138.2,43.3 139.5,42.0 139.5,-0.9 143.6,-0.9 143.6,42.0 144.8,43.3 144.8,100.1"/><polygon points="165.3,100.1 165.3,71.0 166.4,69.8 166.4,12.9 167.5,11.7 167.5,-0.9 168.8,-0.9 168.8,100.1"/></clipPath><polygon points="18.1,-0.9 24.8,-0.9 24.8,100.1 18.1,100.1" fill="#006400"/><polygon points="57.4,100.1 57.4,88.1 58.3,82.4 58.3,59.7 59.9,57.1 60.2,30.6 60.5,14.8 63.4,23.0 64.6,36.9 65.5,62.8 66.8,88.1 66.8,100.1" fill="#006400"/><polygon points="87.4,100.1 87.4,87.5 88.6,86.8 88.6,60.9 89.5,60.3 89.5,35.0 90.5,21.2 91.8,35.0 91.8,60.3 92.7,60.9 92.7,86.8 93.7,87.5 93.7,100.1" fill="#006400"/><polygon points="102.3,100.1 102.3,87.5 103.4,86.8 103.4,60.3 104.4,59.7 104.4,33.2 105.5,19.3 106.7,33.2 106.7,59.7 107.6,60.3 107.6,86.8 108.6,87.5 108.6,100.1" fill="#006400"/><polygon points="138.2,100.1 138.2,43.3 139.5,42.0 139.5,-0.9 143.6,-0.9 143.6,42.0 144.8,43.3 144.8,100.1" fill="#006400"/><polygon points="165.3,100.1 165.3,71.0 166.4,69.8 166.4,12.9 167.5,11.7 167.5,-0.9 168.8,-0.9 168.8,100.1" fill="#006400"/><g fill="#00e000" clip-path="url(#c2)"><rect x="12" y="0" width="1" height="100"/><rect x="27" y="0" width="1" height="100"/><rect x="42" y="0" width="1" height="100"/><rect x="57" y="0" width="1" height="100"/><rect x="72" y="0" width="1" height="100"/><rect x="87" y="0" width="1" height="100"/><rect x="102" y="0" width="1" height="100"/><rect x="117" y="0" width="1" height="100"/><rect x="132" y="0" width="1" height="100"/><rect x="147" y="0" width="1" height="100"/><rect x="162" y="0" width="1" height="100"/><rect x="0" y="10" width="168" height="1"/><rect x="0" y="20" width="168" height="1"/><rect x="0" y="30" width="168" height="1"/><rect x="0" y="40" width="168" height="1"/><rect x="0" y="50" width="168" height="1"/><rect x="0" y="60" width="168" height="1"/><rect x="0" y="70" width="168" height="1"/><rect x="0" y="80" width="168" height="1"/><rect x="0" y="90" width="168" height="1"/></g><polygon points="18.1,-0.9 24.8,-0.9 24.8,100.1 18.1,100.1" fill="none" stroke="#00ee00" stroke-width="1"/><polygon points="57.4,100.1 57.4,88.1 58.3,82.4 58.3,59.7 59.9,57.1 60.2,30.6 60.5,14.8 63.4,23.0 64.6,36.9 65.5,62.8 66.8,88.1 66.8,100.1" fill="none" stroke="#00ee00" stroke-width="1"/><polygon points="87.4,100.1 87.4,87.5 88.6,86.8 88.6,60.9 89.5,60.3 89.5,35.0 90.5,21.2 91.8,35.0 91.8,60.3 92.7,60.9 92.7,86.8 93.7,87.5 93.7,100.1" fill="none" stroke="#00ee00" stroke-width="1"/><polygon points="102.3,100.1 102.3,87.5 103.4,86.8 103.4,60.3 104.4,59.7 104.4,33.2 105.5,19.3 106.7,33.2 106.7,59.7 107.6,60.3 107.6,86.8 108.6,87.5 108.6,100.1" fill="none" stroke="#00ee00" stroke-width="1"/><polygon points="138.2,100.1 138.2,43.3 139.5,42.0 139.5,-0.9 143.6,-0.9 143.6,42.0 144.8,43.3 144.8,100.1" fill="none" stroke="#00ee00" stroke-width="1"/><polygon points="165.3,100.1 165.3,71.0 166.4,69.8 166.4,12.9 167.5,11.7 167.5,-0.9 168.8,-0.9 168.8,100.1" fill="none" stroke="#00ee00" stroke-width="1"/><polygon points="18.1,100.1 19.2,96.9 21.3,92.5 22.9,96.9 24.2,100.1" fill="#3c6cf0" stroke="#3c6cf0" stroke-width="0.6"/><polygon points="28.6,100.1 30.3,98.6 31.8,100.1" fill="#3c6cf0" stroke="#3c6cf0" stroke-width="0.6"/><polygon points="46.3,100.1 48.5,98.6 50.1,100.1" fill="#3c6cf0" stroke="#3c6cf0" stroke-width="0.6"/><polygon points="57.7,100.1 60.8,97.8 64.0,98.6 65.3,100.1" fill="#3c6cf0" stroke="#3c6cf0" stroke-width="0.6"/><polygon points="136.0,100.1 139.1,96.9 141.7,94.4 143.6,100.1" fill="#3c6cf0" stroke="#3c6cf0" stroke-width="0.6"/><polygon points="153.0,100.1 153.7,99.2 154.3,100.1" fill="#3c6cf0" stroke="#3c6cf0" stroke-width="0.6"/><polygon points="166.3,100.1 167.8,97.8 168.8,97.8 168.8,100.1" fill="#3c6cf0" stroke="#3c6cf0" stroke-width="0.6"/></svg>
<svg class="gr" style="left:1318px;top:480px" width="168" height="100" viewBox="0 0 168 100"><rect width="168" height="100" fill="#000"/><g fill="#008000"><rect x="12" y="0" width="1" height="100"/><rect x="27" y="0" width="1" height="100"/><rect x="42" y="0" width="1" height="100"/><rect x="57" y="0" width="1" height="100"/><rect x="72" y="0" width="1" height="100"/><rect x="87" y="0" width="1" height="100"/><rect x="102" y="0" width="1" height="100"/><rect x="117" y="0" width="1" height="100"/><rect x="132" y="0" width="1" height="100"/><rect x="147" y="0" width="1" height="100"/><rect x="162" y="0" width="1" height="100"/><rect x="0" y="10" width="168" height="1"/><rect x="0" y="20" width="168" height="1"/><rect x="0" y="30" width="168" height="1"/><rect x="0" y="40" width="168" height="1"/><rect x="0" y="50" width="168" height="1"/><rect x="0" y="60" width="168" height="1"/><rect x="0" y="70" width="168" height="1"/><rect x="0" y="80" width="168" height="1"/><rect x="0" y="90" width="168" height="1"/></g><polygon points="17.0,100.0 18.5,98.0 20.0,100.0" fill="#3c6cf0" stroke="#3c6cf0" stroke-width="0.6"/></svg>
<svg class="gr" style="left:1318px;top:618px" width="168" height="100" viewBox="0 0 168 100"><rect width="168" height="100" fill="#000"/><g fill="#008000"><rect x="12" y="0" width="1" height="100"/><rect x="27" y="0" width="1" height="100"/><rect x="42" y="0" width="1" height="100"/><rect x="57" y="0" width="1" height="100"/><rect x="72" y="0" width="1" height="100"/><rect x="87" y="0" width="1" height="100"/><rect x="102" y="0" width="1" height="100"/><rect x="117" y="0" width="1" height="100"/><rect x="132" y="0" width="1" height="100"/><rect x="147" y="0" width="1" height="100"/><rect x="162" y="0" width="1" height="100"/><rect x="0" y="10" width="168" height="1"/><rect x="0" y="20" width="168" height="1"/><rect x="0" y="30" width="168" height="1"/><rect x="0" y="40" width="168" height="1"/><rect x="0" y="50" width="168" height="1"/><rect x="0" y="60" width="168" height="1"/><rect x="0" y="70" width="168" height="1"/><rect x="0" y="80" width="168" height="1"/><rect x="0" y="90" width="168" height="1"/></g><clipPath id="c4"><polygon points="20.0,82.4 20.8,69.8 22.3,62.8 24.6,58.4 26.1,59.9 31.2,59.7 34.3,57.1 37.5,59.0 43.8,59.7 48.2,54.4 50.7,59.7 53.9,62.8 57.7,53.4 60.8,58.4 64.0,61.6 69.0,59.7 72.6,56.5 78.5,64.5 81.7,57.1 87.4,62.2 93.7,56.1 99.4,58.7 103.1,58.4 108.2,61.6 112.0,55.9 119.6,60.9 123.3,61.2 129.0,57.1 132.8,62.2 138.5,55.3 144.2,62.8 147.3,45.8 149.9,59.7 153.0,59.7 156.2,55.3 159.3,59.0 162.5,53.4 165.7,63.5 168.0,58.4 168.0,100.0 20.0,100.0"/></clipPath><polygon points="20.0,82.4 20.8,69.8 22.3,62.8 24.6,58.4 26.1,59.9 31.2,59.7 34.3,57.1 37.5,59.0 43.8,59.7 48.2,54.4 50.7,59.7 53.9,62.8 57.7,53.4 60.8,58.4 64.0,61.6 69.0,59.7 72.6,56.5 78.5,64.5 81.7,57.1 87.4,62.2 93.7,56.1 99.4,58.7 103.1,58.4 108.2,61.6 112.0,55.9 119.6,60.9 123.3,61.2 129.0,57.1 132.8,62.2 138.5,55.3 144.2,62.8 147.3,45.8 149.9,59.7 153.0,59.7 156.2,55.3 159.3,59.0 162.5,53.4 165.7,63.5 168.0,58.4 168.0,100.0 20.0,100.0" fill="#006400"/><g fill="#00e000" clip-path="url(#c4)"><rect x="12" y="0" width="1" height="100"/><rect x="27" y="0" width="1" height="100"/><rect x="42" y="0" width="1" height="100"/><rect x="57" y="0" width="1" height="100"/><rect x="72" y="0" width="1" height="100"/><rect x="87" y="0" width="1" height="100"/><rect x="102" y="0" width="1" height="100"/><rect x="117" y="0" width="1" height="100"/><rect x="132" y="0" width="1" height="100"/><rect x="147" y="0" width="1" height="100"/><rect x="162" y="0" width="1" height="100"/><rect x="0" y="10" width="168" height="1"/><rect x="0" y="20" width="168" height="1"/><rect x="0" y="30" width="168" height="1"/><rect x="0" y="40" width="168" height="1"/><rect x="0" y="50" width="168" height="1"/><rect x="0" y="60" width="168" height="1"/><rect x="0" y="70" width="168" height="1"/><rect x="0" y="80" width="168" height="1"/><rect x="0" y="90" width="168" height="1"/></g><polyline points="20.0,82.4 20.8,69.8 22.3,62.8 24.6,58.4 26.1,59.9 31.2,59.7 34.3,57.1 37.5,59.0 43.8,59.7 48.2,54.4 50.7,59.7 53.9,62.8 57.7,53.4 60.8,58.4 64.0,61.6 69.0,59.7 72.6,56.5 78.5,64.5 81.7,57.1 87.4,62.2 93.7,56.1 99.4,58.7 103.1,58.4 108.2,61.6 112.0,55.9 119.6,60.9 123.3,61.2 129.0,57.1 132.8,62.2 138.5,55.3 144.2,62.8 147.3,45.8 149.9,59.7 153.0,59.7 156.2,55.3 159.3,59.0 162.5,53.4 165.7,63.5 168.0,58.4" fill="none" stroke="#00ee00" stroke-width="1"/><polyline points="18.8,100.1 18.8,71.0 20.0,40.7 21.3,10.4 24.2,3.5 36.2,3.9 37.5,2.6 42.5,2.8 45.7,6.6 48.2,3.5 53.5,10.2 58.3,3.5 60.8,4.4 64.0,6.4 66.5,6.0 69.0,7.3 72.8,3.1 76.6,5.1 81.0,4.7 84.8,10.2 88.0,9.8 94.3,2.2 97.5,1.6 102.5,3.1 105.0,6.6 108.2,1.3 113.2,6.0 117.0,3.1 120.2,4.4 123.3,2.6 126.5,8.1 131.6,1.8 135.3,2.8 138.5,2.6 142.9,5.1 147.3,1.6 149.9,3.5 153.7,3.5 156.8,6.6 160.0,6.4 162.5,3.5 165.0,5.4 168.2,4.1" fill="none" stroke="#4070ff" stroke-width="2" stroke-linejoin="round"/></svg>
<!-- right scrollbar -->
<div class="ab" style="left:1506px;top:175px;width:1px;height:567px;background:#fff"></div>
<div class="ab" style="left:1507px;top:175px;width:7px;height:567px;background:#fff;border-left:1px solid #cfcfcf"></div>
<div class="ab" style="left:1508px;top:215px;width:6px;height:509px;background:#dadada"></div>
<div class="ab" style="left:1508px;top:191px;width:6px;height:1px;background:#dcdcdc"></div>
<svg class="ab" style="left:1508px;top:176px" width="16" height="16"><polyline points="4.3,9.85 8,6.15 11.7,9.85" fill="none" stroke="#606060" stroke-width="1.1"/></svg>
<svg class="ab" style="left:1508px;top:726px" width="16" height="16"><polyline points="4.3,6.15 8,9.85 11.7,6.15" fill="none" stroke="#606060" stroke-width="1.1"/></svg>
<div class="ab" style="left:1510px;top:468px;width:8px;height:1px;background:#555;box-shadow:0 2px 0 #555,0 4px 0 #555"></div>

<!-- bottom white row -->
<div class="ab" style="left:0;top:886px;width:1514px;height:1px;background:#fff"></div>
</body></html>
